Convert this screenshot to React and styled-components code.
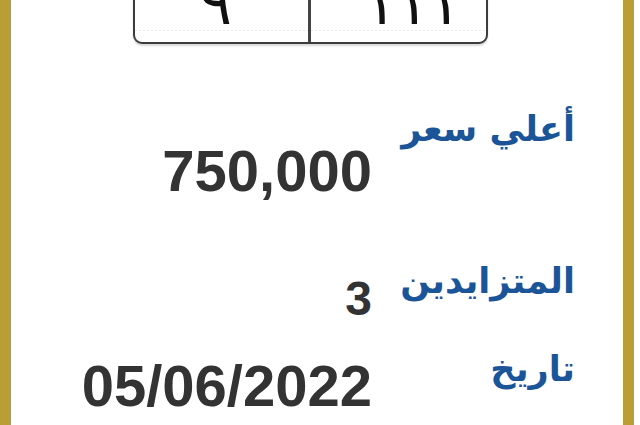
import React from "react";
import styled, { createGlobalStyle } from "styled-components";

const GlobalStyle = createGlobalStyle`
  html, body {
    margin: 0;
    padding: 0;
    background: #fff;
  }
`;

// drop = how far the number sits below its label, space = gap under the row
const rows = [
  { label: "أعلي سعر", value: "750,000", drop: 37, space: 57, size: 58 },
  { label: "المتزايدين", value: "3", drop: 18, space: 22, size: 48 },
  { label: "تاريخ", value: "05/06/2022", drop: 12, space: 0, size: 58 },
];

const App = () => {
  return (
    <>
      <GlobalStyle />
      <Page>
        <Card>
          <Plate>
            <PlateCell>٩</PlateCell>
            <PlateCell wide>١١١</PlateCell>
          </Plate>
          <Details>
            {rows.map(({ label, value, drop, space, size }) => (
              <Row key={label} space={space}>
                <Label>{label}</Label>
                <Value drop={drop} size={size}>
                  {value}
                </Value>
              </Row>
            ))}
          </Details>
        </Card>
      </Page>
    </>
  );
};

const Page = styled.div`
  width: 640px;
  height: 425px;
  padding-right: 6px;
  box-sizing: border-box;
  overflow: hidden;
`;

const Card = styled.div`
  display: flow-root;
  height: 100%;
  border-left: 11px solid #bb9d36;
  border-right: 11px solid #bb9d36;
  background: #fff;
  box-sizing: border-box;
`;

const Plate = styled.div`
  display: grid;
  grid-template-columns: 176px 1fr;
  width: 355px;
  height: 84px;
  margin: -40px 0 0 122px;
  border: 2px solid #3c3c3c;
  border-radius: 9px;
  box-sizing: border-box;
  box-shadow: 0 2px 2px rgba(0, 0, 0, 0.15);
  background: #fff;
  overflow: hidden;
`;

const PlateCell = styled.div`
  display: flex;
  justify-content: ${(props) => (props.wide ? "center" : "flex-end")};
  align-items: flex-end;
  padding: 0 ${(props) => (props.wide ? "0" : "76px")} 9px ${(props) => (props.wide ? "28px" : "0")};
  border-right: ${(props) => (props.wide ? "none" : "3px solid #444")};
  font-family: "DejaVu Sans", sans-serif;
  font-size: 60px;
  line-height: 1;
  color: #111;
  letter-spacing: ${(props) => (props.wide ? "6px" : "0")};
  background-image: linear-gradient(to right, #e6e6e6 50%, transparent 50%);
  background-size: 4px 1px;
  background-repeat: repeat-x;
  background-position: 8px calc(100% - 11px);
`;

const Details = styled.div`
  direction: rtl;
  padding: 61px 48px 0 0;
`;

const Row = styled.div`
  display: grid;
  grid-template-columns: 203px auto;
  align-items: start;
  margin-bottom: ${(props) => props.space}px;
`;

const Label = styled.div`
  font-family: "DejaVu Sans", sans-serif;
  font-weight: bold;
  font-size: 35px;
  line-height: 1.4;
  color: #1b5597;
`;

const Value = styled.div`
  direction: ltr;
  justify-self: start;
  margin-top: ${(props) => props.drop}px;
  font-family: "Liberation Sans", Arial, sans-serif;
  font-weight: bold;
  font-size: ${(props) => props.size}px;
  line-height: 1;
  color: #333;
`;

export default App;
